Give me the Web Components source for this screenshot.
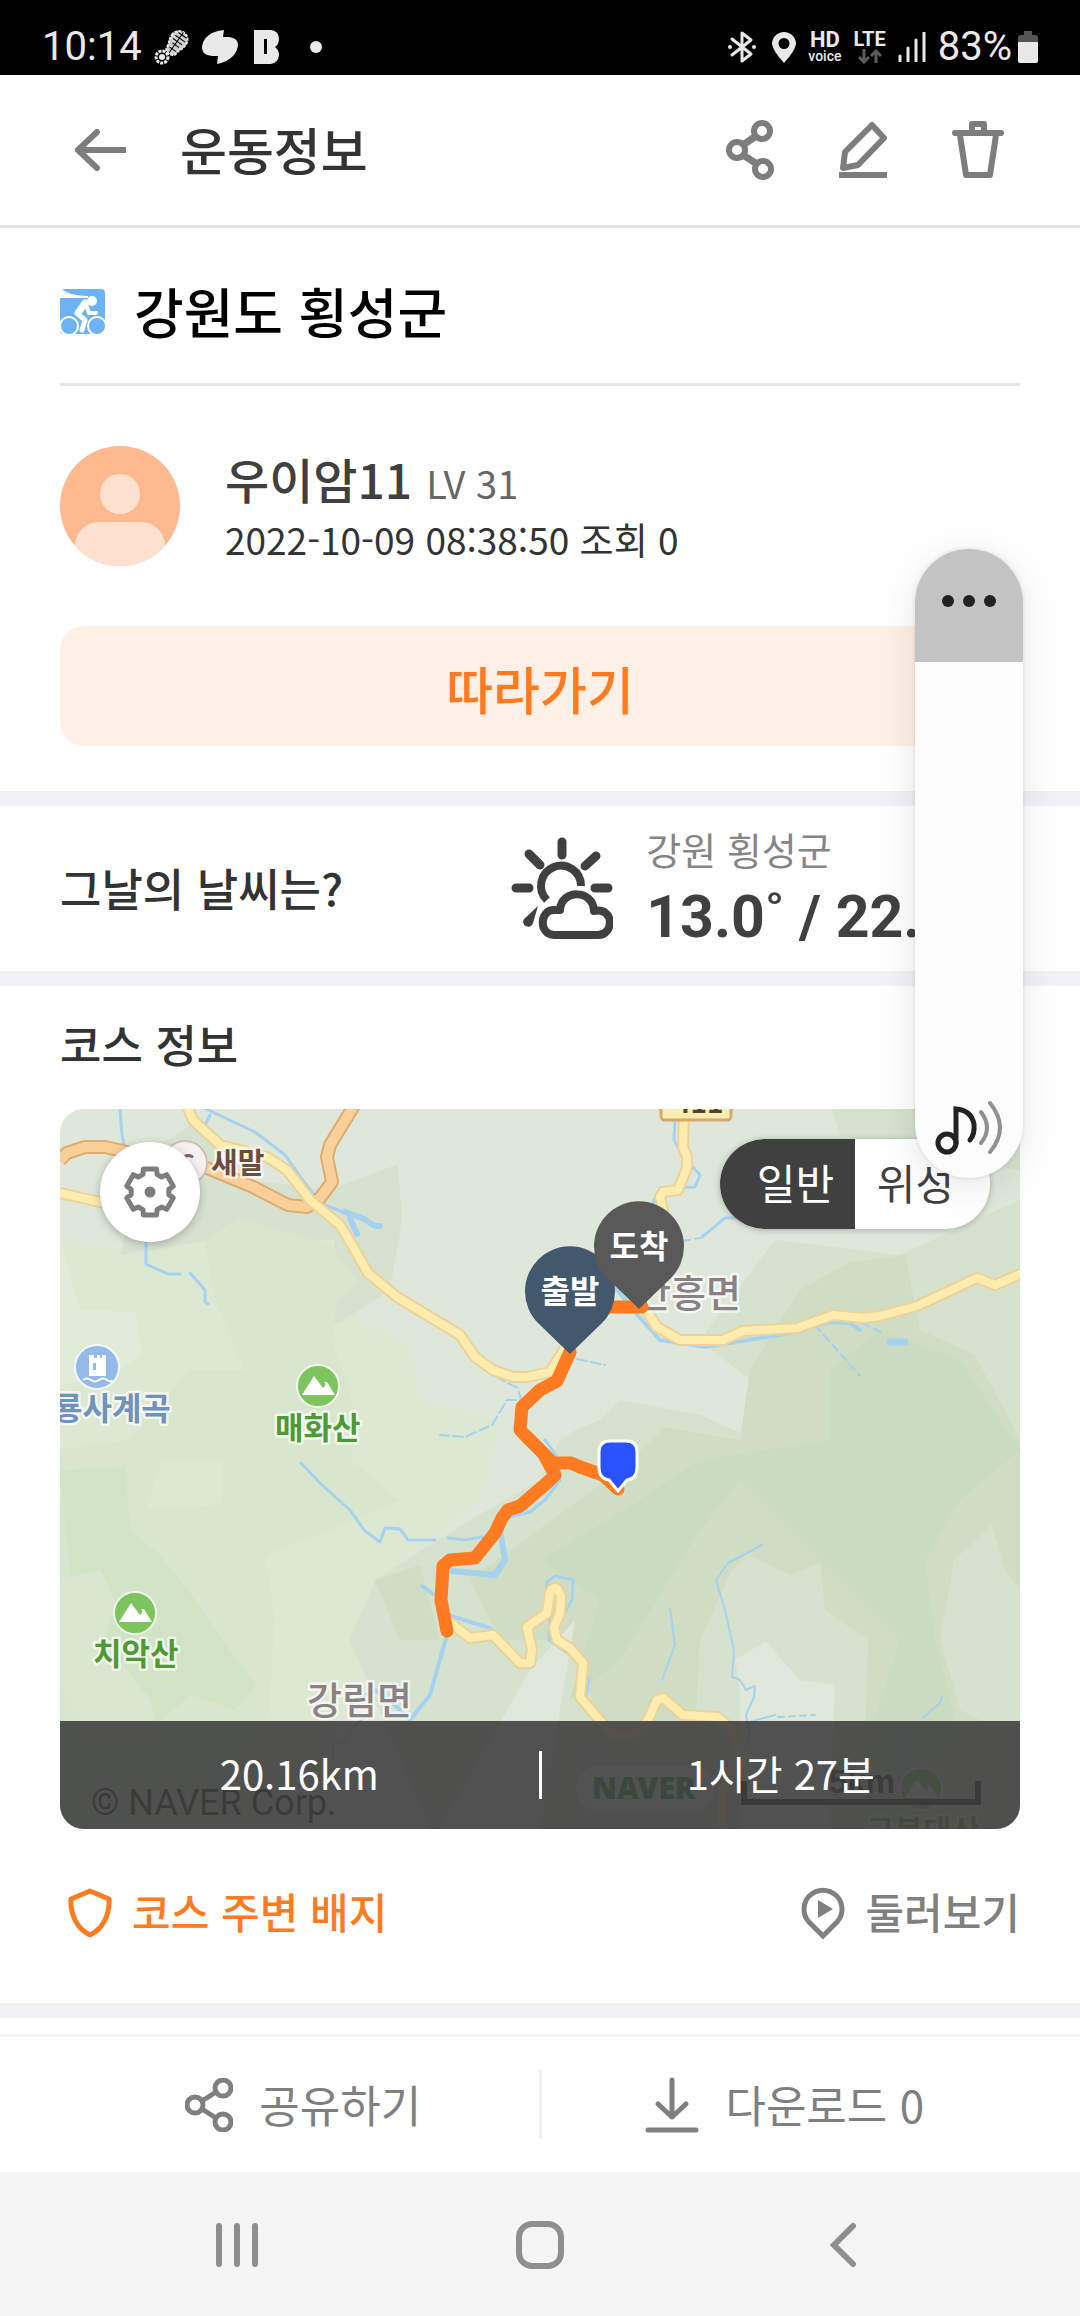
<!DOCTYPE html>
<html lang="ko">
<head>
<meta charset="utf-8">
<meta name="viewport" content="width=device-width, initial-scale=1">
<title>운동정보</title>
<style>
  html, body { margin: 0; background: #fff; }
  body { font-family: "Noto Sans CJK KR", sans-serif; color: #333; }
</style>
</head>
<body>
<course-app></course-app>
<script>
const define = (tag, css, html) => {
  const template = document.createElement('template');
  template.innerHTML = `<style>
    :host { display: block; box-sizing: border-box; }
    *, *::before { box-sizing: border-box; }
    button { font: inherit; color: inherit; background: none; border: 0; padding: 0; margin: 0; cursor: pointer; }
    h1, h2, p { margin: 0; font-weight: 500; }
    svg { display: block; flex: none; }
    ${css}</style>${html}`;
  customElements.define(tag, class extends HTMLElement {
    constructor() {
      super();
      this.attachShadow({ mode: 'open' }).append(template.content.cloneNode(true));
    }
  });
};

/* Six-tooth gear outline around the origin */
const gearPath = () => {
  const pts = [];
  for (let k = 0; k < 6; k++) {
    for (const [angle, r] of [[-16, 24], [16, 24], [22, 19], [38, 19]]) {
      const a = (k * 60 + angle - 90) * Math.PI / 180;
      pts.push(`${(r * Math.cos(a)).toFixed(1)} ${(r * Math.sin(a)).toFixed(1)}`);
    }
  }
  return `M${pts.join('L')}Z`;
};

const icons = {
  back: [54, 44, '<g fill="none" stroke="currentColor" stroke-width="6"><path d="M5 22H53"/><path d="M24 4L5 22L24 40" stroke-linecap="round" stroke-linejoin="round"/></g>'],
  share: [48, 60, '<g fill="none" stroke="currentColor" stroke-width="6"><circle cx="36" cy="11" r="8"/><circle cx="11" cy="30" r="8"/><circle cx="37" cy="49" r="8"/><path d="M30 16L17 25M17 35L31 44" stroke-width="7"/></g>'],
  shareThin: [48, 54, '<g fill="none" stroke="currentColor" stroke-width="5"><circle cx="38" cy="10" r="8"/><circle cx="10" cy="27" r="8"/><circle cx="38" cy="44" r="8"/><path d="M31 14L17 23M17 31L31 40"/></g>'],
  edit: [48, 58, '<g fill="none" stroke="currentColor" stroke-width="6" stroke-linejoin="round"><path d="M33 4L45 17L19 44L4 47L6 31Z"/><path d="M0 54H48"/></g>'],
  trash: [52, 58, '<g fill="none" stroke="currentColor" stroke-width="6" stroke-linejoin="round"><path d="M3 12H49" stroke-linecap="round"/><path d="M20 11V3H32V11"/><path d="M8 14L14 54H38L44 14"/></g>'],
  bike: [45, 45, '<rect width="45" height="45" rx="4" fill="#6cb3f6"/><path d="M0 0H2Q9 7 28 7V9H0Z" fill="#fff"/><circle cx="32" cy="12" r="5" fill="#fff"/><g fill="none" stroke="#fff" stroke-linecap="round" stroke-linejoin="round"><path d="M25 14L18 24" stroke-width="7"/><path d="M26 15L29 24H36" stroke-width="4"/><path d="M18 25L25 31L22 41" stroke-width="5"/><circle cx="9" cy="37" r="9" stroke-width="2"/><circle cx="37" cy="37" r="9" stroke-width="2"/></g>'],
  avatar: [120, 120, '<clipPath id="c"><circle cx="60" cy="60" r="60"/></clipPath><g clip-path="url(#c)"><rect width="120" height="120" fill="#ffb98e"/><circle cx="60" cy="48" r="20" fill="#ffe1d0"/><rect x="15" y="76" width="90" height="70" rx="24" fill="#ffe1d0"/></g>'],
  weather: [102, 104, '<g fill="none" stroke="#404040" stroke-width="9" stroke-linecap="round"><path d="M51 5V18M5 51H18M84 51H97M18 17L29 28M85 19L74 29"/><path d="M36 63A20 20 0 1 1 70 49" stroke-width="8" stroke-linecap="butt"/><path d="M43 98C28 98 28 73 43 73H49C50 52 82 52 83 74C104 70 103 98 87 98Z" stroke-width="8" stroke-linejoin="round"/></g><path d="M27 69L13 82A5 5 0 1 0 22 86Z" fill="#404040"/>'],
  gear: [54, 54, `<g transform="translate(27 27)"><path d="${gearPath()}" fill="none" stroke="#7d7d7d" stroke-width="5" stroke-linejoin="round"/><circle r="5.5" fill="#7d7d7d"/></g>`],
  shield: [44, 50, '<path d="M22 3L41 11C42 26 35 41 22 47C9 41 2 26 3 11Z" fill="none" stroke="currentColor" stroke-width="5" stroke-linejoin="round"/>'],
  tour: [44, 54, '<path d="M22 50L8 36A19 19 0 1 1 36 36Z" fill="none" stroke="currentColor" stroke-width="5"/><path d="M17 14L32 23L17 32Z" fill="currentColor"/>'],
  download: [54, 56, '<g fill="none" stroke="currentColor" stroke-width="5" stroke-linecap="round" stroke-linejoin="round"><path d="M27 3V40M13 27L27 40L41 27M3 53H51"/></g>'],
  recents: [44, 46, '<path d="M4 4V42M22 4V42M40 4V42" stroke="currentColor" stroke-width="6" stroke-linecap="round"/>'],
  home: [48, 48, '<rect x="3" y="3" width="42" height="42" rx="13" fill="none" stroke="currentColor" stroke-width="6"/>'],
  prev: [28, 46, '<path d="M24 4L5 23L24 42" fill="none" stroke="currentColor" stroke-width="6" stroke-linecap="round"/>'],
  music: [68, 56, '<g fill="none" stroke-width="5" stroke-linecap="round"><circle cx="12" cy="43" r="9" stroke="#222"/><path d="M21 43V9Q36 10 39 24Q40 34 35 40" stroke="#222"/><path d="M46 12Q58 28 46 43M55 3Q75 28 55 52" stroke="#919191" stroke-width="4"/></g>'],
  boot: [36, 36, '<g transform="rotate(35 22 14)" fill="none" stroke="#e9e9e9"><path d="M14 10C14 -2 31 -2 31 10C31 16 28 18 28 23C28 28 17 28 17 23C17 18 14 16 14 10Z" fill="#ccc" stroke-width="2" stroke-dasharray="3 1"/><path d="M18 4H28M17 8H29M17 12H28M19 16H27M19 21H27M22 1V26" stroke="#000" stroke-width="1"/></g><circle cx="8" cy="28" r="6" fill="none" stroke="#e9e9e9" stroke-width="3" stroke-dasharray="3 1"/><circle cx="8" cy="28" r="3" fill="#e9e9e9"/>'],
  swirl: [36, 36, '<path d="M22 1C8 2 0 10 0 19C1 27 8 27 16 27L15 35C29 32 36 24 36 15C35 8 28 8 21 8Z" fill="#e9e9e9"/>'],
  blockB: [26, 34, '<path fill="#e9e9e9" fill-rule="evenodd" d="M0 0H17Q25 1 25 9Q25 14 21 17Q25 20 25 25Q24 33 17 34H0ZM10 9V24H13V9Z"/>'],
  dot: [12, 12, '<circle cx="6" cy="6" r="6" fill="#e9e9e9"/>'],
  bluetooth: [28, 34, '<path d="M4 9L23 24L14 31V3L23 10L4 25" fill="none" stroke="#e9e9e9" stroke-width="3" stroke-linejoin="round" stroke-linecap="round"/><circle cx="2" cy="17" r="2" fill="#e9e9e9"/><circle cx="26" cy="17" r="2" fill="#e9e9e9"/>'],
  place: [24, 32, '<path fill="#e9e9e9" fill-rule="evenodd" d="M12 1A12 12 0 0 1 24 13Q23 20 12 32Q1 20 0 13A12 12 0 0 1 12 1ZM12 7A5 5 0 1 0 12 18A5 5 0 1 0 12 7Z"/>'],
  updown: [24, 15, '<path d="M6 0V13M1 8L6 13L11 8M18 14V2M13 7L18 2L23 7" fill="none" stroke="#5c5c5c" stroke-width="3"/>'],
  signal: [28, 30, '<path d="M2 24V29M10 16V29M18 8V29M26 1V29" stroke="#e9e9e9" stroke-width="3" stroke-linecap="round"/>'],
  battery: [20, 34, '<path d="M6 1H14V5H17Q20 5 20 8V16H0V8Q0 5 3 5H6Z" fill="#555"/><path d="M0 12H20V31Q20 33 17 33H3Q0 33 0 31Z" fill="#e9e9e9"/>']
};

customElements.define('ui-icon', class extends HTMLElement {
  constructor() {
    super();
    this.attachShadow({ mode: 'open' });
  }
  connectedCallback() {
    const [w, h, body] = icons[this.getAttribute('name')];
    this.shadowRoot.innerHTML = `<style>:host { display: block; flex: none; } svg { display: block; }</style>
      <svg width="${w}" height="${h}" viewBox="0 0 ${w} ${h}" aria-hidden="true">${body}</svg>`;
  }
});

define('status-bar', `
  :host { display: flex; align-items: center; justify-content: space-between; height: 75px; padding: 18px 42px 0; background: #000; color: #e9e9e9; font: 40px/48px Roboto, sans-serif; }
  div { display: flex; align-items: center; }
  .left { gap: 12px; }
  .left ui-icon:nth-of-type(3) { margin: 0 18px 0 4px; }
  .right { gap: 12px; }
  .right ui-icon[name=place] { margin: 0 0 0 4px; }
  .stack { display: flex; flex-direction: column; align-items: center; gap: 1px; font-weight: 700; font-size: 22px; line-height: 18px; }
  .voice { font-size: 14px; line-height: 12px; font-weight: 500; }
  .lte { font-size: 20px; }
  .power { gap: 6px; }
`, `
  <div class="left"><span>10:14</span><ui-icon name="boot"></ui-icon><ui-icon name="swirl"></ui-icon><ui-icon name="blockB"></ui-icon><ui-icon name="dot"></ui-icon></div>
  <div class="right">
    <ui-icon name="bluetooth"></ui-icon><ui-icon name="place"></ui-icon>
    <span class="stack"><span>HD</span><span class="voice">voice</span></span>
    <span class="stack lte"><span>LTE</span><ui-icon name="updown"></ui-icon></span>
    <ui-icon name="signal"></ui-icon>
    <div class="power"><span>83%</span><ui-icon name="battery"></ui-icon></div>
  </div>`);

define('page-header', `
  :host { display: flex; align-items: center; height: 153px; padding: 0 76px 0 73px; border-bottom: 3px solid #e3e3e3; color: #7d7d7d; }
  h1 { flex: 1; margin-left: 53px; padding-bottom: 2px; font-size: 51px; line-height: 72px; color: #333; }
  nav { display: flex; align-items: center; gap: 65px; }
`, `
  <button aria-label="뒤로"><ui-icon name="back"></ui-icon></button>
  <h1><slot></slot></h1>
  <nav><button aria-label="공유"><ui-icon name="share"></ui-icon></button><button aria-label="수정"><ui-icon name="edit"></ui-icon></button><button aria-label="삭제"><ui-icon name="trash"></ui-icon></button></nav>`);

define('course-title', `
  :host { display: flex; align-items: center; gap: 29px; height: 158px; margin: 0 60px; padding-top: 12px; border-bottom: 3px solid #e5e5e5; color: #000; }
  h2 { padding-bottom: 2px; font-size: 54px; line-height: 72px; }
`, `<ui-icon name="bike"></ui-icon><h2><slot></slot></h2>`);

define('user-profile', `
  :host { padding: 60px 60px 45px; }
  .who { display: flex; align-items: center; gap: 45px; height: 120px; margin-bottom: 60px; }
  .name { display: flex; align-items: baseline; gap: 14px; font-size: 48px; line-height: 60px; color: #404040; }
  .level { font-size: 38px; font-weight: 400; color: #666; }
  .meta { font-size: 37px; line-height: 52px; font-weight: 400; }
  .follow { display: block; width: 100%; height: 120px; padding-top: 4px; border-radius: 24px; background: #fff0e7; color: #ff7b21; font-size: 51px; font-weight: 500; }
`, `
  <div class="who"><ui-icon name="avatar"></ui-icon>
    <div><p class="name"><slot name="name"></slot><span class="level"><slot name="level"></slot></span></p><p class="meta"><slot name="meta"></slot></p></div>
  </div>
  <button class="follow">따라가기</button>`);

define('section-gap', `:host { height: 15px; background: #f1f2f4; }`, ``);

define('day-weather', `
  :host { display: flex; align-items: center; justify-content: space-between; height: 165px; padding: 0 60px; overflow: hidden; }
  h2 { font-size: 45px; line-height: 60px; padding-bottom: 2px; }
  .info { display: flex; align-items: center; gap: 33px; flex: 0 0 53%; white-space: nowrap; }
  .place { font-size: 38px; line-height: 56px; font-weight: 400; color: #858585; }
  .temp { font: 700 59px/80px Roboto, sans-serif; color: #404040; }
`, `
  <h2>그날의 날씨는?</h2>
  <div class="info"><ui-icon name="weather"></ui-icon><div><p class="place"><slot name="place"></slot></p><p class="temp"><slot name="temp"></slot></p></div></div>`);

const mountain = (x, y) => `<g transform="translate(${x} ${y})"><circle r="21" fill="#7dc45f" stroke="#fff" stroke-opacity=".8" stroke-width="2"/><path d="M-16 9L-4 -10L5 2Q9 -1 6 -4L9 -4L17 9Z" fill="#fff"/></g>`;
const road = (d, w, fill, edge) => `<path d="${d}" stroke="${edge}" stroke-width="${w + 4}"/><path d="${d}" stroke="${fill}" stroke-width="${w}"/>`;
const yellow = d => road(d, 8, '#feecae', '#ebd39a');
const drop = (x, y, fill, label) => `<g transform="translate(${x} ${y})"><path d="M0 0L-32 -31A45 45 0 1 1 32 -31Z" fill="${fill}"/><text y="-51" class="pin">${label}</text></g>`;

define('course-map', `
  :host { position: relative; aspect-ratio: 4 / 3; border-radius: 24px; overflow: hidden; background: #dee7d9; }
  .canvas { width: 100%; height: 100%; }
  text { font-family: "Noto Sans CJK KR", sans-serif; font-weight: 700; paint-order: stroke; stroke: #fff; stroke-opacity: .7; stroke-width: 5px; stroke-linejoin: round; }
  text.town { font-weight: 500; }
  text.pin { font-size: 32px; fill: #fff; text-anchor: middle; stroke: none; }
  text.plain { stroke: none; }
  .controls { position: absolute; inset: 30px 30px auto 40px; display: flex; align-items: flex-start; justify-content: space-between; }
  .gear { display: flex; align-items: center; justify-content: center; width: 100px; height: 100px; margin-top: 3px; border-radius: 50%; background: #fff; box-shadow: 0 2px 8px rgba(0,0,0,.25); }
  .mode { display: flex; height: 90px; margin: 0; padding: 0; border: 0; border-radius: 45px; overflow: hidden; background: #fff; box-shadow: 0 1px 6px rgba(0,0,0,.25); }
  .mode label { display: flex; align-items: center; width: 135px; padding-bottom: 6px; justify-content: center; font-size: 42px; color: #404040; }
  .mode label:first-of-type { padding-left: 16px; }
  .mode label:last-of-type { padding-right: 14px; }
  .mode label:has(input:checked) { background: #404040; color: #fff; }
  .mode input { position: absolute; opacity: 0; margin: 0; }
  .stats { position: absolute; inset: auto 0 0; display: flex; align-items: center; height: 108px; background: rgba(64,64,64,.9); color: #fff; font-size: 40px; line-height: 60px; text-align: center; }
  .stats span { flex: 1; padding-bottom: 4px; }
  .stats i { width: 3px; height: 48px; background: #fff; }
`, `
  <svg class="canvas" viewBox="60 1109 960 720" preserveAspectRatio="xMidYMid slice" role="img" aria-label="코스 지도">
    <g stroke="none">
      <path fill="#dce8d2" d="M60 1240L120 1250L200 1240L340 1240L365 1280L355 1320L410 1345L420 1400L500 1420L480 1500L400 1560L370 1640L300 1830H60Z"/>
      <path fill="#d6e2cf" d="M150 1150L200 1120L250 1180L330 1190L398 1164L402 1220L390 1290L320 1335L335 1240L210 1240L120 1255Z"/>
      <path fill="#d8e6cd" d="M205 1240L240 1218L330 1245L358 1282L337 1300L332 1340L345 1380L358 1420L350 1460L400 1500L330 1530L265 1555L275 1620L268 1720L200 1829H60V1450L130 1440L190 1370L245 1370L215 1300Z"/>
      <path fill="#e0ecd8" d="M60 1240L80 1310L135 1312L142 1355L110 1375L60 1385Z"/>
      <path fill="#d2e3c6" d="M60 1470L125 1467L130 1530L160 1555L195 1600L230 1650L255 1685L235 1710L190 1695L150 1730L60 1640L70 1570Z"/>
      <path fill="#dae7d0" d="M60 1580L100 1570L115 1600L105 1640L150 1700L160 1740L80 1730L60 1680Z"/>
      <path fill="#dce8d2" d="M162 1460L223 1460L221 1505L145 1510Z"/>
      <path fill="#d5e2ce" d="M375 1580L470 1520L540 1480L560 1440L620 1400L700 1415L745 1435L750 1380L700 1340L775 1240L900 1255L1020 1200V1829H430L350 1640Z"/>
      <path fill="#cfddc4" d="M470 1580L620 1470L665 1427L740 1440L750 1370L800 1290L850 1262L905 1255L920 1330L975 1355L1020 1440V1829H560L600 1720L570 1640L500 1640Z"/>
      <path fill="#cadbc0" d="M640 1500L700 1460L830 1440L830 1370L880 1330L960 1360L1020 1450L960 1500L925 1560L935 1640L960 1740L900 1829H840L900 1640L820 1560L740 1480L700 1530L620 1660L570 1700L600 1600L540 1560Z"/>
      <path fill="#d5e2ce" d="M732 1570L748 1555L790 1575L820 1563L825 1610L868 1640L862 1829H690L700 1640Z"/>
      <path fill="#d5e2ce" d="M954 1560L992 1525L1005 1570L1020 1590V1740L960 1710L940 1640Z"/>
      <path fill="#dfe8da" d="M735 1660L766 1641L800 1680L835 1685L830 1829H740V1690Z"/>
      <path fill="#dfe8da" d="M440 1829L530 1670L575 1620L540 1829Z"/>
      <path fill="#cfddc4" d="M375 1580L420 1565L440 1640L400 1640Z"/>
      <path fill="#dee7d9" d="M540 1390L640 1380L700 1350L715 1400L733 1415L725 1418L642 1380L600 1420L550 1440Z"/>
      <path fill="#d5e2ce" d="M832 1109H1020V1170L900 1150L840 1135Z"/>
    </g>
    <g fill="none" stroke="#a6d2f0" stroke-width="3" stroke-linejoin="round" stroke-linecap="round">
      <path d="M120 1109L122 1135L127 1160M146 1240V1264L168 1274H180M190 1273L205 1290V1302L208 1304M206 1109L255 1132L285 1155L310 1190L325 1205L345 1213M210 1115L205 1125"/>
      <path d="M345 1212L362 1218L375 1226H380M350 1218L357 1234" stroke-width="6"/>
      <path d="M675 1120L674 1140L682 1155L700 1175L695 1187L660 1188L653 1203M735 1218H725L702 1237"/>
      <path d="M682 1241L700 1238M862 1323L885 1334M815 1325L860 1376" stroke-width="2" stroke-dasharray="8 5"/>
      <path d="M613 1285L640 1318L660 1340L705 1347L780 1335L830 1322L850 1323L860 1330" stroke-width="4"/>
      <path d="M890 1342H905" stroke-width="7"/>
      <path d="M577 1359L605 1365M485 1368L505 1382L518 1388L521 1400H507L492 1425L465 1437L440 1435" stroke-width="2" stroke-dasharray="10 4"/>
      <path d="M301 1463L322 1485L350 1510L364 1530L380 1542L385 1528L400 1529L408 1540H435M448 1538L465 1540L482 1537M545 1440L558 1458L560 1480L545 1500L530 1512L510 1517"/>
      <path d="M500 1530L505 1560L495 1575L452 1571" stroke-width="6"/>
      <path d="M448 1615L490 1628L525 1663M446 1638L430 1695L410 1720M352 1703L375 1690L390 1700L410 1720M422 1586L433 1594" stroke-width="4"/>
      <path d="M545 1610L547 1582L555 1576L573 1580L572 1600L565 1612M550 1617L549 1640L580 1662L589 1680L586 1698L612 1740L585 1755L580 1829"/>
      <path d="M762 1545L728 1563L716 1580L725 1610L734 1650L732 1677L740 1680L746 1690L755 1686L754 1697L746 1715L750 1735L740 1760M750 1722L775 1715M923 1718L940 1703L942 1697M670 1608L675 1645L662 1680M900 1740V1800M370 1712L350 1730L345 1745L333 1740V1760" stroke-width="2"/>
      <path d="M778 1717L815 1715" stroke-width="2" stroke-dasharray="6 5"/>
    </g>
    <g fill="none" stroke-linejoin="round">
      ${road('M60 1160L67 1153L85 1147L105 1147L127 1152L207 1168L253 1187L288 1205L307 1207L320 1198L332 1182L327 1157L330 1145L355 1104', 10, '#fad09a', '#dfac70')}
      ${yellow('M60 1193L100 1202L150 1210')}
      ${yellow('M186 1104L193 1120L220 1145L267 1157L287 1170L310 1200L340 1225L352 1245L368 1273L397 1297L460 1335L475 1357L493 1370L513 1377L527 1377L550 1372L567 1345')}
      ${yellow('M684 1110L683 1147L687 1157L687 1168L678 1190L663 1192L660 1197L663 1210L645 1260L640 1300L657 1327L680 1340L723 1340L743 1331L797 1328L833 1315L863 1318L880 1316L917 1306L977 1278L995 1285L1025 1272')}
      ${yellow('M449 1622L470 1638L493 1635L520 1663H530L532 1650L527 1627L547 1613L550 1592Q555 1584 559 1592L561 1597L560 1613L554 1627L557 1640L570 1648L583 1663L580 1697L597 1717L613 1735H630L647 1722L657 1700L663 1698L683 1715L717 1717L730 1727L740 1750L722 1790V1829')}
    </g>
    <circle cx="185" cy="1163" r="22" fill="#f6f1ef" stroke="#cdbfbc" stroke-width="2"/>
    <text class="plain" x="179" y="1172" font-size="24" fill="#7a6a66">C</text>
    <text x="211" y="1174" font-size="29" fill="#6b4c3d">새말</text>
    <rect x="661" y="1092" width="70" height="28" rx="4" fill="#fcedb0" stroke="#d3a86c" stroke-width="3"/>
    <text class="plain" x="674" y="1113" font-size="28" fill="#574124">411</text>
    <circle cx="97" cy="1367" r="22" fill="#94bae9" stroke="#fff" stroke-opacity=".8" stroke-width="2"/>
    <path fill="#fff" fill-rule="evenodd" d="M89 1355H94V1358H97V1355H100V1358H102V1355H106V1376H89ZM93 1363V1370H96V1363Z"/>
    <path d="M83 1380Q87 1377 91 1380T99 1380T107 1380T112 1380" fill="none" stroke="#fff" stroke-width="2"/>
    <text x="53" y="1420" font-size="32" fill="#6f93bd">룡사계곡</text>
    ${mountain(318, 1386)}<text x="275" y="1439" font-size="31" fill="#4f9a35">매화산</text>
    ${mountain(135, 1613)}<text x="93" y="1665" font-size="31" fill="#4f9a35">치악산</text>
    <text class="town" x="307" y="1714" font-size="38" fill="#8a8282">강림면</text>
    <text class="town" x="636" y="1307" font-size="38" fill="#8a8282">안흥면</text>
    ${mountain(921, 1789)}<text x="866" y="1842" font-size="31" fill="#4f9a35">구봉대산</text>
    <text class="plain" x="91" y="1815" font-size="36" style="font-family:Roboto;font-weight:400" fill="#111">© NAVER Corp.</text>
    <rect x="576" y="1766" width="138" height="45" rx="22" fill="#fff" fill-opacity=".7"/>
    <text class="plain" x="592" y="1799" font-size="30" style="font-family:'Noto Sans';font-weight:900" fill="#0a8a2a">NAVER</text>
    <text class="plain" x="829" y="1793" font-size="33" style="font-family:'Liberation Sans'" fill="#111">5km</text>
    <path d="M744 1781V1802H978V1781" fill="none" stroke="#000" stroke-width="6"/>
    <g fill="none" stroke="#ff7b21" stroke-width="13" stroke-linejoin="round" stroke-linecap="round">
      <path d="M642 1307H600M570 1352L557 1381L540 1390L522 1407L520 1430L527 1437L543 1453L555 1475L548 1482L520 1506L508 1510L502 1518L495 1533L475 1558L450 1560L443 1566L441 1600L447 1631"/>
      <path d="M527 1437L553 1463H571L580 1467L603 1475L618 1489"/>
    </g>
    ${drop(570, 1354, '#43586c', '출발')}
    ${drop(639, 1309, '#595959', '도착')}
    <path d="M610 1441H626Q637 1441 637 1452V1467Q637 1479 627 1480L618 1491L609 1480Q599 1479 599 1467V1452Q599 1441 610 1441Z" fill="#2b52ff" stroke="#fff" stroke-width="3"/>
  </svg>
  <div class="controls">
    <button class="gear" aria-label="지도 설정"><ui-icon name="gear"></ui-icon></button>
    <fieldset class="mode" aria-label="지도 종류"><label><input type="radio" name="mode" checked>일반</label><label><input type="radio" name="mode">위성</label></fieldset>
  </div>
  <div class="stats"><span><slot name="distance"></slot></span><i></i><span><slot name="time"></slot></span></div>`);

define('course-section', `
  :host { padding: 0 60px; }
  h2 { display: flex; align-items: center; height: 123px; padding-bottom: 8px; font-size: 45px; line-height: 60px; }
  .links { display: flex; align-items: center; justify-content: space-between; height: 174px; padding-bottom: 6px; font-size: 42px; line-height: 60px; font-weight: 500; color: #808080; }
  .links span { padding-bottom: 4px; }
  button { display: flex; align-items: center; gap: 20px; }
  .badge { color: #ff7b21; padding-left: 8px; }
`, `
  <h2>코스 정보</h2>
  <slot></slot>
  <div class="links"><button class="badge"><ui-icon name="shield"></ui-icon><span>코스 주변 배지</span></button><button><ui-icon name="tour"></ui-icon><span>둘러보기</span></button></div>`);

define('action-bar', `
  :host { display: flex; align-items: center; height: 138px; margin-top: 16px; padding: 0 60px; border-top: 3px solid #f1f2f4; color: #7f7f7f; font-size: 44px; line-height: 60px; }
  button { flex: 1; display: flex; align-items: center; justify-content: center; gap: 26px; padding-left: 8px; }
  span { padding-bottom: 2px; }
  i { width: 3px; height: 69px; background: #f1f2f4; }
`, `<button><ui-icon name="shareThin"></ui-icon><span>공유하기</span></button><i></i><button><ui-icon name="download"></ui-icon><span>다운로드 0</span></button>`);

define('system-nav', `
  :host { display: flex; align-items: center; height: 144px; padding: 2px 86px 0; background: #f5f5f5; color: #8f8f8f; }
  button { flex: 1; display: flex; justify-content: center; }
`, `<button aria-label="최근 앱"><ui-icon name="recents"></ui-icon></button><button aria-label="홈"><ui-icon name="home"></ui-icon></button><button aria-label="이전"><ui-icon name="prev"></ui-icon></button>`);

define('volume-panel', `
  :host { position: absolute; top: 549px; right: 57px; display: flex; flex-direction: column; width: 108px; height: 629px; border-radius: 54px; overflow: hidden; background: #fcfcfc; box-shadow: 0 0 4px rgba(0,0,0,.12), 0 8px 40px rgba(0,0,0,.1); }
  .more { display: flex; justify-content: center; gap: 9px; height: 113px; padding-top: 46px; background: #c4c3c3; }
  .more i { width: 12px; height: 12px; border-radius: 50%; background: #222; }
  .sound { margin-top: auto; padding: 0 20px 22px; }
`, `<button class="more" aria-label="더보기"><i></i><i></i><i></i></button><button class="sound" aria-label="미디어 음량"><ui-icon name="music"></ui-icon></button>`);

define('course-app', `:host { position: relative; }`, `
  <status-bar></status-bar>
  <page-header>운동정보</page-header>
  <main>
    <course-title>강원도 횡성군</course-title>
    <user-profile><span slot="name">우이암11</span><span slot="level">LV 31</span><span slot="meta">2022-10-09 08:38:50 조회 0</span></user-profile>
    <section-gap></section-gap>
    <day-weather><span slot="place">강원 횡성군</span><span slot="temp">13.0˚ / 22.</span></day-weather>
    <section-gap></section-gap>
    <course-section>
      <course-map><span slot="distance">20.16km</span><span slot="time">1시간 27분</span></course-map>
    </course-section>
    <section-gap></section-gap>
  </main>
  <action-bar></action-bar>
  <system-nav></system-nav>
  <volume-panel></volume-panel>`);
</script>
</body>
</html>
